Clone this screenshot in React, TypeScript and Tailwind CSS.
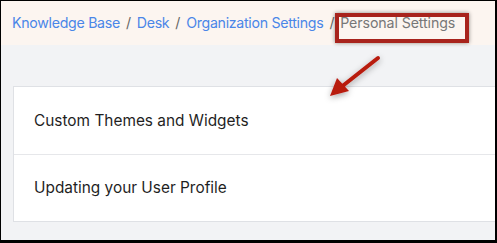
import React from "react";

export default function App() {
  return (
    <div className="relative w-[497px] h-[243px] overflow-hidden bg-black pt-px pl-px pr-[2px] pb-[3px]" style={{ fontFamily: "Inter, 'Open Sans', sans-serif" }}>
      <div className="relative w-full h-full bg-[#f2f3f5] flex flex-col">
        <div className="h-[44px] bg-[#fcf5f0] flex items-center pl-[11px] text-[14.2px] tracking-[-0.3px]">
          <span className="text-[#4a86e8]">Knowledge Base</span>
          <span className="text-[#666] mx-[6px]">/</span>
          <span className="text-[#4a86e8]">Desk</span>
          <span className="text-[#666] mx-[6px]">/</span>
          <span className="text-[#4a86e8]">Organization Settings</span>
          <span className="text-[#666] mx-[6px]">/</span>
          <span className="text-[#777] tracking-[-0.1px]">Personal Settings</span>
        </div>
        <div className="pt-[41px] pl-[12px]">
          <div className="bg-white border border-[#dfe1e5] border-r-0 text-[15.4px] text-[#1f1f1f]">
            <div className="h-[68px] flex items-center pl-[20px] border-b border-[#e6e7ea]">Custom Themes and Widgets</div>
            <div className="h-[66px] flex items-center pl-[20px]">Updating your User Profile</div>
          </div>
        </div>
        <div className="absolute left-[334px] top-[12px] w-[134px] h-[30px] border-[4px] border-[#a8231c] shadow-[0_0_4px_rgba(0,0,0,0.45)]" />
        <svg className="absolute left-[320px] top-[50px]" width="70" height="55" viewBox="0 0 70 55">
          <defs>
            <filter id="s" x="-50%" y="-50%" width="200%" height="200%">
              <feDropShadow dx="0" dy="2" stdDeviation="3" floodColor="#000" floodOpacity="0.35" />
            </filter>
          </defs>
          <g filter="url(#s)">
            <line x1="57" y1="7" x2="19" y2="37" stroke="#b81a10" strokeWidth="4" strokeLinecap="round" />
            <polygon points="9,45 16,27 28,40" fill="#b81a10" />
          </g>
        </svg>
      </div>
    </div>
  );
}
